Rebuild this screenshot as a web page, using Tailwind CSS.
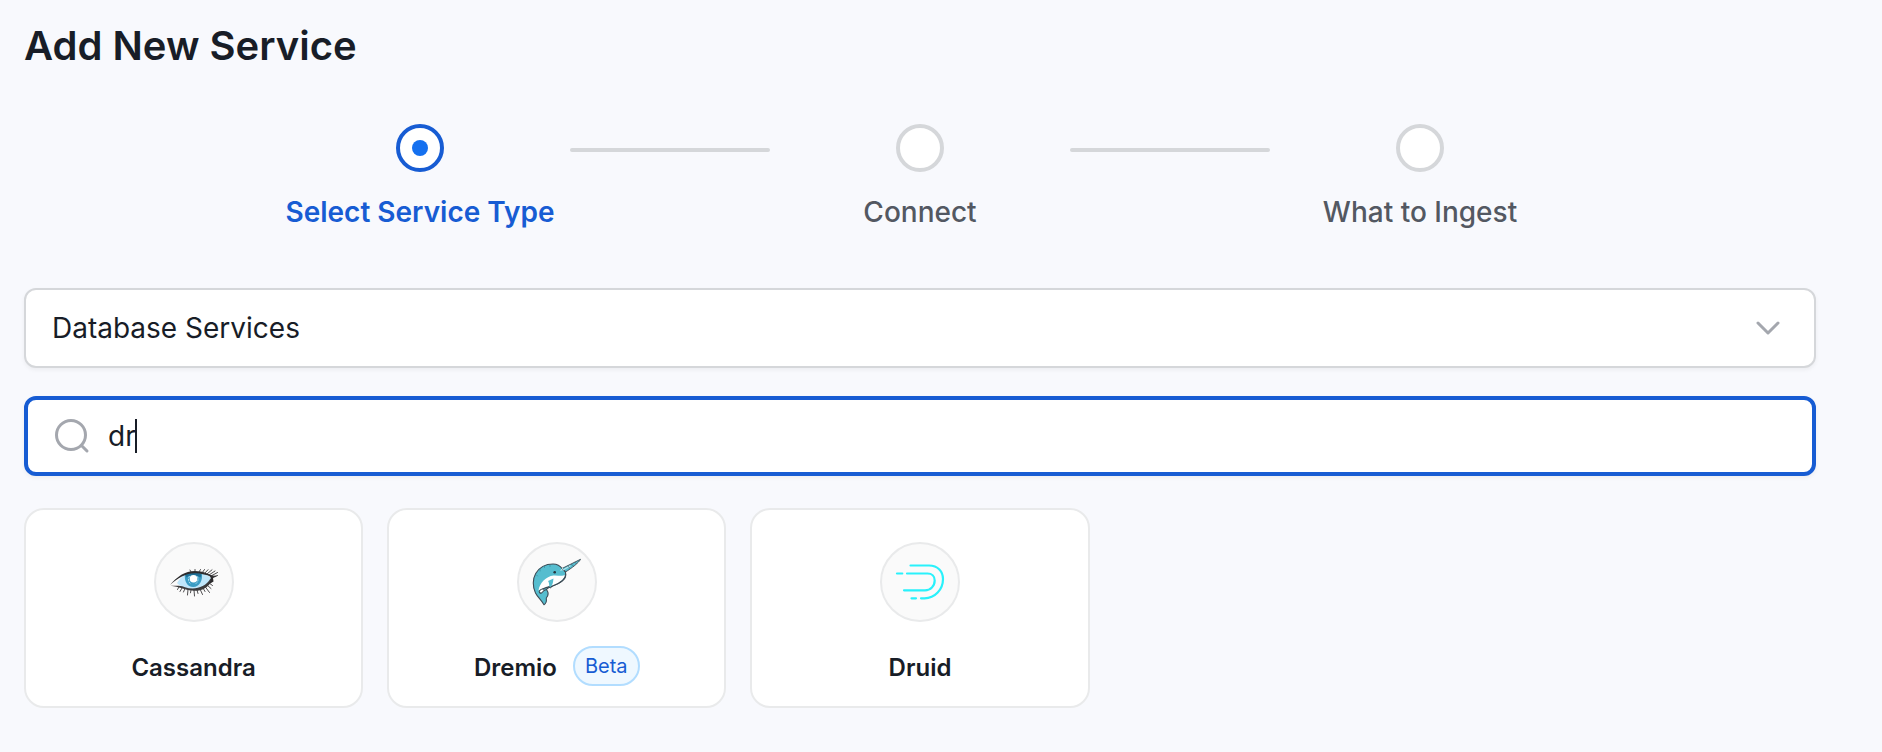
<!DOCTYPE html>
<html lang="en">
<head>
  <meta charset="UTF-8">
  <meta name="viewport" content="width=device-width, initial-scale=1.0">
  <title>Add New Service</title>
  <script src="https://cdn.jsdelivr.net/npm/@tailwindcss/browser@4"></script>
</head>
<body class="min-h-screen bg-[#f8f9fd] font-['Inter',sans-serif] text-[#181d27]">
  <main class="pt-5 pr-[66px] pb-11 pl-6">
    <h1 class="text-[40px] leading-[52px] font-semibold">Add New Service</h1>

    <!-- Stepper -->
    <ol class="mt-13 flex justify-center">
      <li class="flex w-[300px] flex-col items-center" aria-current="step">
        <span class="flex size-12 items-center justify-center rounded-full border-4 border-[#175cd3] bg-white">
          <span class="size-4 rounded-full bg-[#1570ef]"></span>
        </span>
        <span class="mt-5 text-[28px] leading-10 font-semibold text-[#175cd3]">Select Service Type</span>
      </li>
      <li class="mt-6 h-1 w-[200px] rounded-sm bg-[#d5d7da]" aria-hidden="true"></li>
      <li class="flex w-[300px] flex-col items-center">
        <span class="size-12 rounded-full border-4 border-[#d5d7da] bg-white"></span>
        <span class="mt-5 text-[28px] leading-10 font-medium text-[#535862]">Connect</span>
      </li>
      <li class="mt-6 h-1 w-[200px] rounded-sm bg-[#d5d7da]" aria-hidden="true"></li>
      <li class="flex w-[300px] flex-col items-center">
        <span class="size-12 rounded-full border-4 border-[#d5d7da] bg-white"></span>
        <span class="mt-5 text-[28px] leading-10 font-medium text-[#535862]">What to Ingest</span>
      </li>
    </ol>

    <!-- Service category -->
    <div class="relative mt-14">
      <select aria-label="Service category" class="block h-20 w-full appearance-none rounded-xl border-2 border-[#d5d7da] bg-white px-[26px] text-[28px] shadow-[0_2px_4px_rgba(10,13,18,0.05)] outline-none">
        <option>Database Services</option>
      </select>
      <svg class="pointer-events-none absolute top-6 right-8 size-8" viewBox="0 0 32 32" fill="none" stroke="#a4a7ae" stroke-width="3" stroke-linecap="round" stroke-linejoin="round" aria-hidden="true">
        <path d="M6 11l10 10 10-10"/>
      </svg>
    </div>

    <!-- Search -->
    <div class="relative mt-7 flex h-20 items-center gap-4 rounded-xl border-4 border-[#175cd3] bg-white px-6 shadow-[0_2px_4px_rgba(10,13,18,0.05)]">
      <svg class="size-10 shrink-0" viewBox="0 0 40 40" fill="none" stroke="#a4a7ae" stroke-width="3" stroke-linecap="round" aria-hidden="true">
        <circle cx="19" cy="19" r="14.5"/>
        <path d="M29.5 29.5L35 35"/>
      </svg>
      <input id="search" type="text" value="dr" aria-label="Search for connector" class="h-full min-w-0 flex-1 bg-transparent text-[28px] caret-transparent outline-none">
      <span class="absolute top-[19px] left-[107px] h-[34px] w-0.5 bg-[#181d27]" aria-hidden="true"></span>
    </div>

    <!-- Connectors -->
    <div class="mt-8 grid grid-cols-5 gap-6">
      <button type="button" class="flex flex-col items-center rounded-[20px] border-2 border-[#e9eaeb] bg-white pt-8 pb-5">
        <span class="size-20 rounded-full border-2 border-[#e9eaeb] bg-[#fafafa]">
          <svg class="size-19" viewBox="2 2 76 76" fill="none" aria-hidden="true">
            <path d="M23 41C27 34 34 30 42 30.500C49 31 54 33 57 36C54 43 47 47 40 47C33 47 27 45 23 41Z" fill="#bfe6fb"/>
            <path d="M31 32.500C36 30 43 30 47.800 32C49 38 45.500 45 39.300 45C33 45 30 38.500 31 32.500Z" fill="#3a9cc4"/>
            <path d="M31.500 33C37 30.500 43 30.500 47.500 32.500L46.500 35.500C42 32.500 36 32.500 32.500 35.500Z" fill="#1f6f96"/>
            <path d="M35.500 34C33.500 37 34.500 40.500 37 42.200M43.500 34.500C45 38 43.500 41 41 42.200" stroke="#b5e2f2" stroke-width="0.900" stroke-dasharray="2 1"/>
            <circle cx="39.500" cy="36.700" r="3.800" fill="#fff"/>
            <path d="M16 43C23 34.500 31 28.900 41 28.900C49 28.900 54 32 61 34.500C55 34.500 50 31.800 42 31.300C32 31 24 36 16 43Z" fill="#2b2a2c"/>
            <path d="M16.500 43.700C22 43.800 28 43.400 31 45.200C40 48.200 51 46 56.500 36.500L58.500 37.500C54 47 46 49.500 38 48.600C31 47.700 25 44.700 16.500 43.700Z" fill="#3c3b3d"/>
            <path d="M53 32.500C57 34.500 57.500 36 56.500 39L54.500 42.500L59.500 39.500L59 36L63 34.300Z" fill="#2b2a2c"/>
            <path d="M37 30L36 28M41 30L41 27.500M45 30L46.500 27.500M48 31L50.500 27.500M50.500 31.500L54 27.700M53 32L58 27.800M55 33L61 29M57 34L63.500 30.500M58 35L63.500 33.500M25 45L23.500 47.500M28 46L26 49.500M31 46.500L29.500 50M34 47.500L33.500 53M37 48L36.500 50.800M40 48L40.500 54M43 48L44 51.500M46 47L48.500 52.500M49 46L51 49.500M51 44.500L55.500 50.500M53 43L57 46.500M55 41L58.500 43.500" stroke="#3c3b3d" stroke-width="0.900" stroke-linecap="round"/>
          </svg>
        </span>
        <span class="mt-6 flex h-10 items-center gap-4">
          <span class="pt-1 text-2xl font-semibold">Cassandra</span>
        </span>
      </button>

      <button type="button" class="flex flex-col items-center rounded-[20px] border-2 border-[#e9eaeb] bg-white pt-8 pb-5">
        <span class="size-20 rounded-full border-2 border-[#e9eaeb] bg-[#fafafa]">
          <svg class="size-19" viewBox="2 2 76 76" fill="none" stroke="#3d4b55" stroke-linecap="round" stroke-linejoin="round" aria-hidden="true">
            <path d="M45 26.500L63.500 17.300C62 20.500 55 26 48.500 30Z" fill="#56bdcf" stroke-width="0.900"/>
            <path d="M45.500 27C43 23.500 40 22 36 22C28 22 22 26 18.700 31.500C15.500 37 15.500 45 18.500 51C20.500 55 24 57.500 27 62.700C30 61 29.500 58 29.300 56C32 53 31.300 50 29.500 47.500C30.500 46 33 45 35.500 44C41 42 48 38 48.700 34L48.500 30Z" fill="#56bdcf" stroke-width="1.100"/>
            <path d="M48.500 32.500C45 35 41 33 36.500 33.500C29 34.500 22.500 41 21.500 48.500C25 47.500 29 45 34 44C41 42 47.500 38 48.500 32.500Z" fill="#fff" stroke="none"/>
            <path d="M48.700 32C49 38 41 42 35.500 44C30 45.500 25 46.500 22.500 48.800C22 51 23.500 51.800 25 50.500C26 49 27.500 48 29.500 47.500" stroke-width="1.200"/>
            <path d="M22.500 49C23.500 47.500 26 46.500 27 47.500C27 49 24.500 51.500 23.300 51Z" fill="#fff" stroke-width="0.800"/>
            <path d="M31 39L36.500 36.500C36 39 36.500 42.500 33 45.500C31.500 44.500 33 42 31 39Z" fill="#56bdcf" stroke="none"/>
            <path d="M32 45L33.500 46L35 44.300" stroke-width="1"/>
            <circle cx="37.700" cy="30.300" r="1.300" fill="#26343d" stroke="none"/>
            <path d="M46 28L53 24" stroke="#b8e5eb" stroke-width="1.200"/>
            <path d="M51 24L53 26.500M54.500 22.500L56.500 24M58 20.500L59.500 21.500" stroke-width="0.500"/>
            <path d="M23 27V29M27.500 24V25.500M19.500 33L20.500 34M33 23V24.500" stroke="#32899b" stroke-width="0.700"/>
            <path d="M44 28.500L45.500 26.500" stroke="#d6f1f4" stroke-width="1"/>
          </svg>
        </span>
        <span class="mt-6 flex h-10 items-center gap-4">
          <span class="pt-1 text-2xl font-semibold">Dremio</span>
          <span class="flex h-10 items-center rounded-full border-2 border-[#b2ddff] bg-[#eff8ff] px-2.5 text-xl text-[#175cd3]">Beta</span>
        </span>
      </button>

      <button type="button" class="flex flex-col items-center rounded-[20px] border-2 border-[#e9eaeb] bg-white pt-8 pb-5">
        <span class="size-20 rounded-full border-2 border-[#e9eaeb] bg-[#fafafa]">
          <svg class="size-19" viewBox="2 2 76 76" fill="none" stroke="#29f1fb" stroke-width="2.200" stroke-linecap="round" aria-hidden="true">
            <path d="M30.500 23.500H49C58 23.500 63 29.500 63 37C63 47.500 55 56.300 44.500 56.300H41"/>
            <path d="M31.500 56.300H36"/>
            <path d="M27 31.500H47.500C52 31.500 54.700 34.500 54.700 38.500C54.700 44 50.500 48.300 45 48.300H24"/>
            <path d="M17 31.500H22.300"/>
          </svg>
        </span>
        <span class="mt-6 flex h-10 items-center gap-4">
          <span class="pt-1 text-2xl font-semibold">Druid</span>
        </span>
      </button>
    </div>
  </main>
</body>
</html>
